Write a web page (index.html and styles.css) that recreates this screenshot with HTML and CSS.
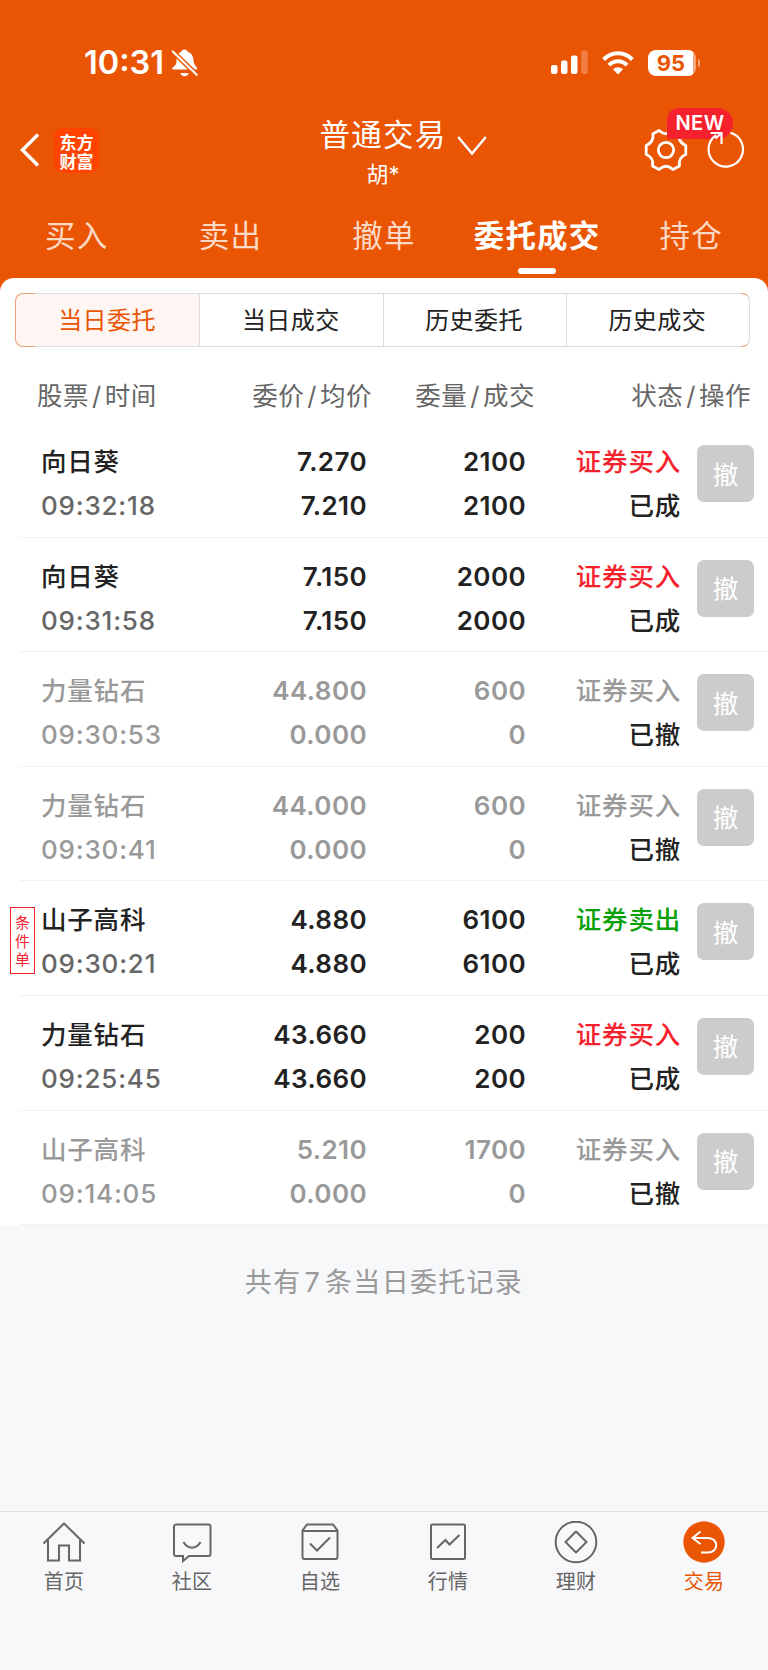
FILE: index.html
```html
<!DOCTYPE html>
<html lang="zh-CN">
<head>
  <meta charset="UTF-8">
  <meta name="viewport" content="width=device-width, initial-scale=1.0">
  <title>委托成交</title>
  <link rel="stylesheet" href="styles.css">
</head>
<body>
  <header class="header">
    <div class="status-bar">
      <span class="clock">10:31</span>
      <svg class="bell" width="28" height="28" viewBox="0 0 28 28">
        <path d="M1.200 20.500c-.5-3 4.300-3 4.300-8C5.500 6.500 7.500 3.500 10.300 2.700 10.800 1.300 12 .5 13.500.5s2.700.8 3.200 2.200C20 3.500 22.500 7 22.500 11.500c0 5 4.500 6 3.500 9z" fill="#fff"/>
        <path d="M9.300 24h8.400c-.3 1.800-2 3.200-4.200 3.200s-3.900-1.400-4.200-3.200z" fill="#fff"/>
        <path d="M1.800 2.500l23.900 23.200" stroke="#ea5504" stroke-width="5"/>
        <path d="M1.800 2.500l23.900 23.200" stroke="#fff" stroke-width="2.200" stroke-linecap="round"/>
      </svg>
      <div class="signals">
        <svg width="38" height="25" viewBox="0 0 38 25" fill="#fff">
          <rect x="0" y="15" width="6.500" height="9" rx="2"/>
          <rect x="10" y="10.500" width="6.500" height="13.500" rx="2"/>
          <rect x="20" y="5.500" width="6.500" height="18.500" rx="2"/>
          <rect x="30.300" y="0.500" width="6.500" height="23.500" rx="2" opacity=".25"/>
        </svg>
        <svg class="wifi" width="32" height="24" viewBox="0 0 32 24" fill="none" stroke="#fff" stroke-width="4">
          <path d="M1.600 8.500C9.600.2 22.400.2 30.400 8.500"/>
          <path d="M7 14.200c5-5.200 13-5.200 18 0"/>
          <path d="M11 18.300c2.900-2.900 7.100-2.900 10 0l-5 5.200z" fill="#fff" stroke="none"/>
        </svg>
        <span class="battery">95</span>
        <span class="battery-tip"></span>
      </div>
    </div>

    <div class="title-bar">
      <svg class="back" width="20" height="34" viewBox="0 0 20 34" fill="none" stroke="#fff" stroke-width="3.500">
        <path d="M18 1.500L2.500 17 18 32.500"/>
      </svg>
      <div class="logo">东方<br>财富</div>
      <div class="account">
        <div class="account-type">普通交易</div>
        <div class="account-name">胡*</div>
      </div>
      <svg class="arrow" width="30" height="22" viewBox="0 0 30 22" fill="none" stroke="#fff" stroke-width="2.500">
        <path d="M1.200 2L15 18.500 28.800 2"/>
      </svg>
      <div class="tools">
        <svg class="gear" width="44" height="44" viewBox="-22 -22 44 44" fill="none" stroke="#fff" stroke-width="2.800" stroke-linejoin="round">
          <circle r="7.700"/>
          <path d="M-7 -19.500Q0 -13 7 -19.500L13 -16.300Q12 -7.500 19.800 -4.500V4.500Q12 7.500 13.500 16L7 19.500Q0 13 -7 19.500L-13.500 16Q-12 7.500 -19.800 4.500V-4.500Q-12 -7.500 -13 -16.300Z"/>
        </svg>
        <span class="badge">NEW</span>
        <svg class="refresh" width="40" height="40" viewBox="0 0 40 40" fill="none" stroke="#fff" stroke-width="2.200">
          <path d="M24.500 2.800A17.200 17.200 0 1 1 10 5.200M4.500 3h11v11M15.500 3l-6 5.500"/>
        </svg>
      </div>
    </div>

    <nav class="tabs">
      <a>买入</a>
      <a>卖出</a>
      <a>撤单</a>
      <a class="active">委托成交</a>
      <a>持仓</a>
    </nav>
  </header>

  <main class="sheet">
    <div class="segment">
      <a class="on">当日委托</a>
      <a>当日成交</a>
      <a>历史委托</a>
      <a>历史成交</a>
    </div>
    <div class="list-head">
      <span>股票<i>/</i>时间</span>
      <span>委价<i>/</i>均价</span>
      <span>委量<i>/</i>成交</span>
      <span>状态<i>/</i>操作</span>
    </div>
    <div id="orderList"></div>
  </main>

  <p class="total">共有<span>7</span>条当日委托记录</p>

  <footer class="bottom-nav">
    <a>
      <svg width="44" height="44" viewBox="0 0 44 44">
        <path d="M1.500 22.500L22 2.500l20.500 20M6 19v20.500h11V24.500h10v15h11V19"/>
      </svg>
      首页
    </a>
    <a>
      <svg width="44" height="44" viewBox="0 0 44 44">
        <path d="M5.500 3.500h33a2 2 0 0 1 2 2v27.500a2 2 0 0 1-2 2H19l-6 5v-5H6a2 2 0 0 1-2-2V5.500a2 2 0 0 1 2-2zM13.500 21c4 7.500 13 7.500 17 0"/>
      </svg>
      社区
    </a>
    <a>
      <svg width="44" height="44" viewBox="0 0 44 44">
        <path d="M4.500 9.500L9 3.500h26l4.500 6V36a2 2 0 0 1-2 2h-31a2 2 0 0 1-2-2zM4.500 10h35M12 22.500l7 7 13-13"/>
      </svg>
      自选
    </a>
    <a>
      <svg width="44" height="44" viewBox="0 0 44 44">
        <rect x="5" y="3.500" width="34" height="34.500" rx="1.500"/>
        <path d="M11 27l8.500-8 4 4.500L33.500 14"/>
      </svg>
      行情
    </a>
    <a>
      <svg width="44" height="44" viewBox="0 0 44 44">
        <circle cx="22" cy="21" r="20.300"/>
        <path d="M22 10.500L32.500 21 22 31.500 11.500 21z" stroke-linejoin="round"/>
      </svg>
      理财
    </a>
    <a class="current">
      <svg width="44" height="44" viewBox="0 0 44 44">
        <circle class="dot" cx="22" cy="21" r="20.700"/>
        <path class="line" d="M18.500 10.500L10.500 17l8 6M11 17h15c11 0 11 14.500 0 14.500h-7"/>
      </svg>
      交易
    </a>
  </footer>

  <script>
    const orders = [
      { name: "向日葵", time: "09:32:18", price: "7.270", avg: "7.210", qty: 2100, done: 2100, side: "买入", state: "已成" },
      { name: "向日葵", time: "09:31:58", price: "7.150", avg: "7.150", qty: 2000, done: 2000, side: "买入", state: "已成" },
      { name: "力量钻石", time: "09:30:53", price: "44.800", avg: "0.000", qty: 600, done: 0, side: "买入", state: "已撤" },
      { name: "力量钻石", time: "09:30:41", price: "44.000", avg: "0.000", qty: 600, done: 0, side: "买入", state: "已撤" },
      { name: "山子高科", time: "09:30:21", price: "4.880", avg: "4.880", qty: 6100, done: 6100, side: "卖出", state: "已成", tag: "条件单" },
      { name: "力量钻石", time: "09:25:45", price: "43.660", avg: "43.660", qty: 200, done: 200, side: "买入", state: "已成" },
      { name: "山子高科", time: "09:14:05", price: "5.210", avg: "0.000", qty: 1700, done: 0, side: "买入", state: "已撤" }
    ];

    let html = "";
    for (const o of orders) {
      const cls = o.state === "已撤" ? "order cancelled" : "order";
      const side = o.side === "买入" ? "buy" : "sell";
      html += `<div class="${cls}">
        ${o.tag ? `<span class="tag">${o.tag}</span>` : ""}
        <div class="stock"><div>${o.name}</div><div class="time">${o.time}</div></div>
        <div class="num"><div>${o.price}</div><div>${o.avg}</div></div>
        <div class="num"><div>${o.qty}</div><div>${o.done}</div></div>
        <div class="status"><div class="${side}">证券${o.side}</div><div class="state">${o.state}</div></div>
        <button class="cancel">撤</button>
      </div>`;
    }
    document.getElementById("orderList").innerHTML = html;
  </script>
</body>
</html>
```

FILE: styles.css
```css
* {
  box-sizing: border-box;
}
body {
  margin: 0;
  width: 768px;
  height: 1670px;
  display: flex;
  flex-direction: column;
  background: #f7f8fa;
  color: #222;
  font-family: Inter, "Noto Sans CJK SC", sans-serif;
}
svg {
  display: block;
  flex: none;
}
.header {
  height: 292px;
  background: #ea5504;
  color: #fff;
  flex: none;
}
.status-bar {
  height: 108px;
  padding: 17px 68px 0 84px;
  display: flex;
  align-items: center;
}
.clock {
  width: 79px;
  font-size: 32.500px;
  font-weight: 600;
  white-space: nowrap;
}
.bell {
  margin-left: 8px;
}
.signals {
  margin-left: auto;
  display: flex;
  align-items: center;
}
.wifi {
  margin-left: 13px;
}
.battery {
  margin-left: 14px;
  width: 48px;
  height: 26px;
  line-height: 26px;
  padding-right: 2px;
  border-radius: 8px;
  background: linear-gradient(90deg, #fff 45.500px, #f4a57c 45.500px);
  color: #ea5504;
  font-size: 22px;
  font-weight: 700;
  text-align: center;
}
.battery-tip {
  width: 2px;
  height: 8px;
  margin-left: 2px;
  border-radius: 0 3px 3px 0;
  background: #f4a57c;
}
.title-bar {
  height: 84px;
  padding: 0 22px 0 20px;
  display: flex;
  align-items: center;
}
.logo {
  width: 45px;
  height: 45px;
  margin-left: 14px;
  padding-top: 4px;
  border-radius: 9px;
  background: #ff4400;
  font-family: "Noto Sans CJK SC", sans-serif;
  font-size: 17px;
  font-weight: 700;
  line-height: 19px;
  text-align: center;
}
.account {
  width: 130px;
  margin-left: 219px;
  padding-top: 4px;
  text-align: center;
}
.account-type {
  font-size: 30.500px;
  line-height: 44px;
  letter-spacing: 1.300px;
  white-space: nowrap;
}
.account-name {
  font-size: 22px;
  line-height: 34px;
}
.arrow {
  margin-left: 9px;
  margin-top: -8px;
}
.tools {
  position: relative;
  margin-left: auto;
  display: flex;
  align-items: center;
  gap: 18px;
}
.badge {
  position: absolute;
  left: 23px;
  top: -20px;
  width: 66px;
  height: 31px;
  border-radius: 12px 16px 16px 0;
  background: #f5222d;
  font-size: 20px;
  font-weight: 600;
  line-height: 31px;
  letter-spacing: 0.5px;
  text-align: center;
}
.refresh {
  position: relative;
}
.tabs {
  display: grid;
  grid-template-columns: repeat(5, 1fr);
  height: 82px;
}
.tabs a {
  display: flex;
  flex-direction: column;
  align-items: center;
  padding-top: 22px;
  font-size: 30.500px;
  line-height: 44px;
  letter-spacing: 1.200px;
  color: #fcd9c4;
}
.tabs .active {
  padding-right: 1px;
  color: #fff;
  font-weight: 700;
}
.tabs .active::after {
  content: "";
  width: 38px;
  height: 6px;
  margin-top: 10px;
  border-radius: 3px;
  background: #fff;
}
.sheet {
  position: relative;
  height: 947px;
  margin-top: -14px;
  padding-top: 15px;
  border-radius: 14px 14px 0 0;
  background: #fff;
  flex: none;
}
.segment {
  position: relative;
  display: grid;
  grid-template-columns: repeat(4, 1fr);
  width: 735px;
  height: 54px;
  margin-left: 15px;
  border: 1px solid #dcdde3;
  border-radius: 8px;
}
/* orange tint on the rounded ends */
.segment::before,
.segment::after {
  content: "";
  position: absolute;
  top: -1px;
  bottom: -1px;
  left: -1px;
  width: 19px;
  border: 1px solid #efa27c;
  border-right: 0;
  border-radius: 8px 0 0 8px;
}
.segment::after {
  left: auto;
  right: -1px;
  width: 8px;
  border: 1px solid #efa27c;
  border-left: 0;
  border-right-color: #dcdde3;
  border-radius: 0 8px 8px 0;
}
.segment a {
  height: 52px;
  padding-right: 1px;
  font-size: 24px;
  line-height: 53px;
  letter-spacing: 0.5px;
  text-align: center;
}
.segment a + a {
  border-left: 1px solid #dcdde3;
}
.segment .on {
  border-radius: 7px 0 0 7px;
  background: #fff5f2;
  color: #ea5504;
}
.list-head {
  display: grid;
  grid-template-columns: 200px 135px 163px 216px;
  height: 76px;
  padding-left: 37px;
  font-size: 25.500px;
  line-height: 97px;
  letter-spacing: 0.500px;
  color: #666;
  text-align: right;
  white-space: nowrap;
}
.list-head span:first-child {
  text-align: left;
}
.list-head i {
  margin: 0 3px;
  font-style: normal;
}
.order {
  position: relative;
  display: grid;
  grid-template-columns: 180px 146px 159px 155px 57px;
  height: 114.600px;
  padding: 17px 0 0 41px;
  font-size: 25.500px;
  font-weight: 500;
  line-height: 44px;
  white-space: nowrap;
}
.order::after {
  content: "";
  position: absolute;
  left: 20px;
  right: 0;
  bottom: 0;
  height: 1px;
  background: #f1f2f3;
}
.stock,
.status {
  letter-spacing: 0.8px;
}
.time {
  font-size: 26px;
  letter-spacing: 0.8px;
  color: #666;
}
.num {
  font-size: 26px;
  font-weight: 600;
  letter-spacing: 0.4px;
  text-align: right;
}
.status {
  text-align: right;
}
.buy {
  color: #f5222d;
}
.sell {
  color: #0aa00a;
}
.cancelled,
.cancelled .time,
.cancelled .buy {
  color: #999;
}
.state {
  color: #222;
}
.cancel {
  width: 57px;
  height: 57px;
  margin: 5px 0 0 16px;
  padding: 0 0 3px;
  border: 0;
  border-radius: 7px;
  background: #ccc;
  color: #fff;
  font-family: inherit;
  font-size: 25.500px;
}
.tag {
  position: absolute;
  left: 10px;
  top: 26px;
  width: 25px;
  height: 67px;
  padding: 6px 4px;
  border: 1px solid #f5222d;
  color: #f5222d;
  font-size: 15px;
  font-weight: 400;
  line-height: 18.500px;
  white-space: normal;
}
.total {
  margin: 38px 0 0;
  font-size: 27px;
  line-height: 40px;
  letter-spacing: 1.300px;
  text-align: center;
  color: #999;
}
.total span {
  margin: 0 4px 0 3px;
}
.bottom-nav {
  display: grid;
  grid-template-columns: repeat(6, 1fr);
  height: 159px;
  margin-top: auto;
  padding-top: 9px;
  border-top: 1px solid #dfe0e2;
  background: #f8f8fb;
}
.bottom-nav a {
  display: flex;
  flex-direction: column;
  align-items: center;
  font-size: 20px;
  line-height: 32px;
  letter-spacing: 0.3px;
  color: #666;
}
.bottom-nav svg {
  margin-bottom: 1px;
  fill: none;
  stroke: #666;
  stroke-width: 2;
}
.bottom-nav .current {
  color: #ea5504;
}
.bottom-nav .dot {
  fill: #ea5504;
  stroke: none;
}
.bottom-nav .line {
  stroke: #fff;
}
```
